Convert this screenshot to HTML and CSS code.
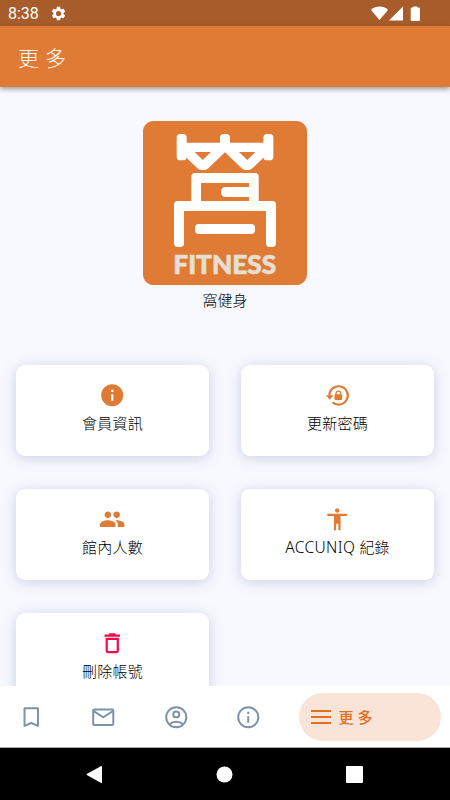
FILE: index.html
```html
<!DOCTYPE html>
<html lang="zh-Hant">
<head>
    <meta charset="UTF-8">
    <meta name="viewport" content="width=device-width, initial-scale=1.0">
    <title>更多</title>
    <link rel="stylesheet" href="styles.css">
</head>
<body>

<div class="status-bar">
    <span class="time">8:38</span>
    <svg class="gear" viewBox="0 0 24 24"><path d="M19.14 12.94c.04-.3.06-.61.06-.94s-.02-.64-.07-.94l2.03-1.58c.18-.14.23-.41.12-.61l-1.92-3.32c-.12-.22-.37-.29-.59-.22l-2.39.96c-.5-.38-1.03-.7-1.62-.94l-.36-2.54C14.36 2.57 14.16 2.4 13.92 2.4h-3.84c-.24 0-.43.17-.47.41l-.36 2.54c-.59.24-1.13.57-1.62.94l-2.39-.96c-.22-.08-.47 0-.59.22L2.74 8.87c-.12.21-.08.47.12.61l2.03 1.58c-.05.3-.09.63-.09.94s.02.64.07.94l-2.03 1.58c-.18.14-.23.41-.12.61l1.92 3.32c.12.22.37.29.59.22l2.39-.96c.5.38 1.03.7 1.62.94l.36 2.54c.05.24.24.41.48.41h3.84c.24 0 .44-.17.47-.41l.36-2.54c.59-.24 1.13-.56 1.62-.94l2.39.96c.22.08.47 0 .59-.22l1.92-3.32c.12-.22.07-.47-.12-.61l-2.01-1.58zM12 15.6A3.6 3.6 0 1 1 12 8.4a3.6 3.6 0 0 1 0 7.2z"/></svg>
    <svg class="signals" viewBox="0 0 50 16"><path d="M0 3.900C4.800-.5 12.200-.5 17 3.900L8.500 14z"/><path d="M32 .5V14.500H18z"/><path d="M40.500 1.500h1.800V.5h4v1h1.800q.8 0 .8.8v12q0 .8-.8.8h-7.600q-.8 0-.8-.8v-12q0-.8.8-.8z"/></svg>
</div>

<header class="app-bar">
    <h1>更多</h1>
</header>

<main class="content">
    <div class="brand">
        <svg class="logo" viewBox="24 18 492 492">
            <rect class="logo-bg" x="24" y="18" width="492" height="492" rx="32"/>
            <g class="logo-shape">
                <rect x="125" y="57" width="30" height="79" rx="11"/>
                <rect x="255" y="57" width="30" height="50" rx="11"/>
                <rect x="385" y="57" width="30" height="79" rx="11"/>
                <path fill-rule="evenodd" d="M150 83H390V124L352 160Q347 165 340 165H332Q325 165 320 160L270 112L220 160Q215 165 208 165H199Q192 165 187 160L150 124ZM179 111L203 135L228 111ZM312 111L337 135L361 111Z"/>
                <path fill-rule="evenodd" d="M180 174H360Q371 174 371 185V258H412Q423 258 423 269V385Q423 396 412 396H404Q393 396 393 385V288H147V385Q147 396 136 396H128Q117 396 117 385V269Q117 258 128 258H169V185Q169 174 180 174ZM198 204V258H342V246H273Q258 246 258 231T273 216H342V204Z"/>
                <rect x="180" y="327" width="180" height="30" rx="11"/>
            </g>
            <text class="logo-text" x="115" y="478" textLength="309" lengthAdjust="spacing">FITNESS</text>
        </svg>
        <p class="brand-name">窩健身</p>
    </div>

    <div class="cards">
        <div class="card">
            <svg class="icon" viewBox="0 0 24 24"><path d="M12 2C6.480 2 2 6.480 2 12s4.480 10 10 10 10-4.480 10-10S17.520 2 12 2zm1 15h-2v-6h2v6zm0-8h-2V7h2v2z"/></svg>
            <span>會員資訊</span>
        </div>
        <div class="card">
            <svg class="icon" viewBox="0 0 24 24"><path class="arc" d="M4.900 12.200A8.300 8.300 0 1 1 7.600 18.300"/><path d="M1.700 12h7l-3.500 4z"/><path d="M15.800 11h-.2v-.7a2.600 2.600 0 0 0-5.200 0v.7h-.2q-.7 0-.7.7v3.800q0 .7.700.7h5.600q.7 0 .7-.7v-3.800q0-.7-.7-.7zm-4.300-.7a1.500 1.500 0 0 1 3 0v.7h-3z"/></svg>
            <span>更新密碼</span>
        </div>
        <div class="card">
            <svg class="icon" viewBox="0 0 24 24"><path d="M16 11c1.660 0 2.990-1.340 2.990-3S17.660 5 16 5s-3 1.340-3 3 1.340 3 3 3zm-8 0c1.660 0 2.990-1.340 2.990-3S9.660 5 8 5 5 6.340 5 8s1.340 3 3 3zm0 2c-2.330 0-7 1.170-7 3.500V19h14v-2.500c0-2.330-4.670-3.500-7-3.500zm8 0c-.29 0-.62.02-.97.05 1.160.84 1.970 1.970 1.970 3.450V19h6v-2.500c0-2.330-4.670-3.500-7-3.500z"/></svg>
            <span>館內人數</span>
        </div>
        <div class="card">
            <svg class="icon" viewBox="0 0 24 24"><path d="M12 2c1.100 0 2 .9 2 2s-.9 2-2 2-2-.9-2-2 .9-2 2-2zm9 7h-6v13h-2v-6h-2v6H9V9H3V7h18v2z"/></svg>
            <span><span class="latin">ACCUNIQ</span> 紀錄</span>
        </div>
        <div class="card">
            <svg class="icon danger" viewBox="0 0 24 24"><path d="M16 9v10H8V9h8m-1.500-6h-5l-1 1H5v2h14V4h-3.500l-1-1zM18 7H6v12c0 1.100.9 2 2 2h8c1.100 0 2-.9 2-2V7z"/></svg>
            <span>刪除帳號</span>
        </div>
    </div>
</main>

<nav class="bottom-nav">
    <svg class="nav-icon" viewBox="0 0 24 24"><path d="M5.900 3.900h12.200v15.900L12 17.200l-6.100 2.600z"/></svg>
    <svg class="nav-icon" viewBox="0 0 24 24"><rect x="2.900" y="4.900" width="18.200" height="14.200" rx="1"/><path d="M3 6.300l9 5.700 9-5.700"/></svg>
    <svg class="nav-icon" viewBox="0 0 24 24"><circle cx="12" cy="12" r="9.100"/><circle cx="12" cy="9.400" r="2.700"/><path d="M5.800 18.300c3.200-3.100 9.200-3.100 12.400 0"/></svg>
    <svg class="nav-icon" viewBox="0 0 24 24"><circle cx="12" cy="12" r="9.100"/><path d="M12 11v6M12 7v2"/></svg>
    <div class="nav-active">
        <svg class="menu-icon" viewBox="0 0 20 14"><path d="M0 1h20M0 7h20M0 13h20"/></svg>
        <span>更多</span>
    </div>
</nav>

<div class="system-bar">
    <svg viewBox="0 0 17 19"><path d="M16 1.500v16q0 .8-.8.400L.8 10q-.6-.5 0-1L15.200 1q.8-.4.8.5z"/></svg>
    <svg viewBox="0 0 17 19"><circle cx="8.500" cy="9.500" r="8"/></svg>
    <svg viewBox="0 0 17 19"><rect y="1" width="17" height="17" rx="1"/></svg>
</div>

</body>
</html>
```
FILE: styles.css
```css
* {
    box-sizing: border-box;
}
body {
    margin: 0;
    height: 800px;
    display: flex;
    flex-direction: column;
    overflow: hidden;
    background-color: #f8f9ff;
    font-family: "Noto Sans", "Noto Sans CJK TC Light", "Noto Sans CJK TC", sans-serif;
    font-weight: 100;
    color: #000;
}
svg {
    display: block;
    flex: none;
}
.status-bar {
    height: 26px;
    flex: none;
    display: flex;
    align-items: center;
    padding: 1px 29px 0 8px;
    background-color: #a85c2a;
    color: #fff;
    fill: #fff;
}
.time {
    font-family: Roboto, sans-serif;
    font-size: 16px;
    font-weight: 400;
    width: 42px;
}
.gear {
    width: 17px;
    height: 17px;
}
.signals {
    width: 50px;
    height: 16px;
    margin-left: auto;
}
.app-bar {
    height: 61px;
    flex: none;
    display: flex;
    align-items: center;
    padding-left: 18px;
    background-color: #e07b36;
    box-shadow: 0 2px 5px rgba(0, 0, 0, 0.4);
    color: #fff;
    z-index: 1;
}
h1 {
    margin: 0;
    font-size: 21px;
    font-weight: 300;
    letter-spacing: 6px;
}
.content {
    flex: 1;
    min-height: 0;
    overflow: hidden;
    padding: 34px 16px 0;
}
.brand {
    display: flex;
    flex-direction: column;
    align-items: center;
    height: 244px;
}
.logo {
    width: 164px;
    height: 164px;
}
.logo-bg {
    fill: #e07b36;
}
.logo-shape {
    fill: #fff;
}
.logo-text {
    font-family: Lato, sans-serif;
    font-size: 79px;
    font-weight: 900;
    fill: #e6dfd2;
    stroke: #e6dfd2;
    stroke-width: 2;
    stroke-linejoin: round;
}
.brand-name {
    margin: 4px 0 0;
    font-size: 15px;
    line-height: 22px;
}
.cards {
    display: grid;
    grid-template-columns: 1fr 1fr;
    gap: 33px 32px;
}
.card {
    height: 91px;
    display: flex;
    flex-direction: column;
    align-items: center;
    padding-top: 17px;
    background-color: #fff;
    border-radius: 9px;
    box-shadow: 0 2px 14px rgba(100, 125, 165, 0.32);
    font-size: 15px;
    line-height: 22px;
    letter-spacing: 0.2px;
}
.latin {
    font-size: 15.5px;
    font-weight: 300;
    letter-spacing: 0.4px;
}
.icon {
    width: 26.5px;
    height: 26.5px;
    margin-bottom: 3px;
    fill: #e07b36;
}
.arc {
    fill: none;
    stroke: #e07b36;
    stroke-width: 2;
}
.danger {
    fill: #f50a4b;
}
.bottom-nav {
    height: 62px;
    flex: none;
    display: flex;
    align-items: center;
    gap: 46px;
    padding: 1px 9px 0 17.5px;
    background-color: #fff;
    border-bottom: 1px solid #aaa;
}
.nav-icon {
    width: 26.5px;
    height: 26.5px;
    fill: none;
    stroke: #7d92ab;
    stroke-width: 1.8;
    stroke-linejoin: round;
}
.nav-active {
    width: 142px;
    height: 48px;
    flex: none;
    display: flex;
    align-items: center;
    gap: 8px;
    margin-left: -9px;
    padding-left: 12px;
    border-radius: 24px;
    background-color: #fae4d8;
    color: #e0701f;
    font-family: "Noto Sans CJK TC", sans-serif;
    font-size: 15px;
    font-weight: 500;
    letter-spacing: 4px;
}
.nav-active span {
    padding-bottom: 2px;
}
.menu-icon {
    width: 20px;
    height: 14px;
    stroke: #e0701f;
    stroke-width: 1.8;
}
.system-bar {
    height: 52px;
    flex: none;
    display: flex;
    align-items: center;
    justify-content: center;
    gap: 113px;
    padding-right: 1px;
    background-color: #000;
    fill: #fff;
}
.system-bar svg {
    width: 17px;
    height: 19px;
}
```
